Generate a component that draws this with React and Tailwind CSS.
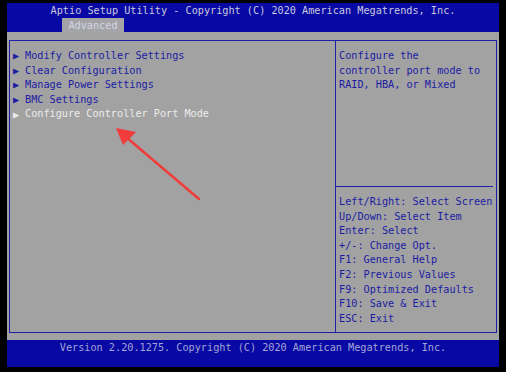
import React from 'react';

const menuItems = [
  'Modify Controller Settings',
  'Clear Configuration',
  'Manage Power Settings',
  'BMC Settings',
  'Configure Controller Port Mode',
];

const helpLines = [
  'Left/Right: Select Screen',
  'Up/Down: Select Item',
  'Enter: Select',
  '+/-: Change Opt.',
  'F1: General Help',
  'F2: Previous Values',
  'F9: Optimized Defaults',
  'F10: Save & Exit',
  'ESC: Exit',
];

const mono = { fontFamily: '"DejaVu Sans Mono", "Liberation Mono", monospace' };

const App = () => {
  const selected = 4;

  return (
    <div
      className="relative w-[506px] h-[372px] bg-black pt-[3px] pl-[7px] pr-[7px] pb-[5px] text-[10.2px] leading-[14.6px]"
      style={mono}
    >
      <div className="flex flex-col h-full">
        {/* title bar */}
        <div className="h-[29px] bg-[#0808a4] flex flex-col">
          <div className="h-[15px] pt-[1px] text-center text-[#c8c9de] whitespace-pre">
            Aptio Setup Utility - Copyright (C) 2020 American Megatrends, Inc.
          </div>
          <div className="flex pl-[55px]">
            <div className="w-[62px] h-[14px] bg-[#a4a4a8] text-[#d2d6e4] text-center leading-[15px]">
              Advanced
            </div>
          </div>
        </div>

        {/* main area */}
        <div className="flex-1 bg-[#a2a2a2] px-[2px] pt-[8px] pb-[7px]">
          <div className="h-full border border-[#1e1ea6] flex">
            <div className="w-[326px] border-r border-[#1e1ea6] pt-[8px] pl-[3px]">
              {menuItems.map((item, i) => (
                <div
                  key={item}
                  className={`flex items-center whitespace-pre ${
                    i === selected ? 'text-[#ececec]' : 'text-[#1c1ca2]'
                  }`}
                >
                  <span className="w-[12px] text-[10px] leading-[14px]">▶</span>
                  <span>{item}</span>
                </div>
              ))}
            </div>
            <div className="flex-1 flex flex-col text-[#1c1ca2]">
              <div className="h-[145px] pt-[8px] pl-[3px]">
                <div>Configure the</div>
                <div>controller port mode to</div>
                <div>RAID, HBA, or Mixed</div>
              </div>
              <div className="h-px bg-[#1e1ea6] mr-[3px]" />
              <div className="pt-[8px] pl-[3px] whitespace-pre">
                {helpLines.map((line) => (
                  <div key={line}>{line}</div>
                ))}
              </div>
            </div>
          </div>
        </div>

        {/* footer */}
        <div className="h-[27px] bg-[#0808a4] pt-[1px] text-center text-[#a4a6d6] whitespace-pre">
          Version 2.20.1275. Copyright (C) 2020 American Megatrends, Inc.
        </div>
      </div>

      {/* red annotation arrow */}
      <svg className="absolute left-0 top-0 pointer-events-none" width="506" height="372">
        <line x1="199" y1="199" x2="126" y2="137" stroke="#f23b3b" strokeWidth="2.5" strokeLinecap="round" />
        <polygon points="116,128 136,132 123,145" fill="#f23b3b" />
      </svg>
    </div>
  );
};

export default App;
